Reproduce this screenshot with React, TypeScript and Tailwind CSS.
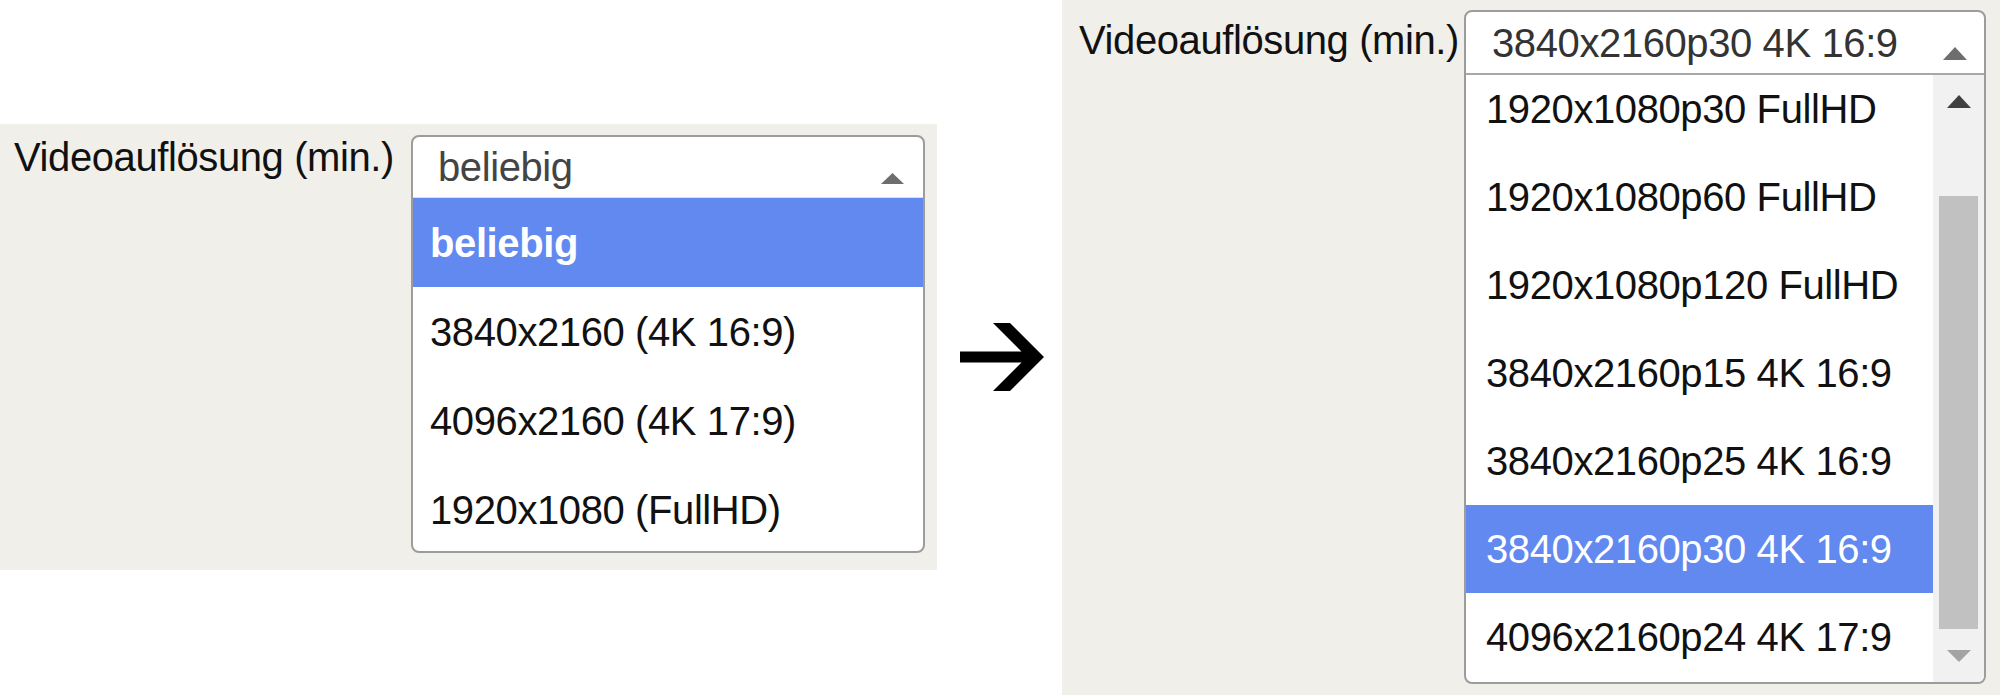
import React from 'react';

const OLD_OPTIONS = ['beliebig', '3840x2160 (4K 16:9)', '4096x2160 (4K 17:9)', '1920x1080 (FullHD)'];

const NEW_OPTIONS = [
    '1920x1080p30 FullHD',
    '1920x1080p60 FullHD',
    '1920x1080p120 FullHD',
    '3840x2160p15 4K 16:9',
    '3840x2160p25 4K 16:9',
    '3840x2160p30 4K 16:9',
    '4096x2160p24 4K 17:9',
];

const Triangle: React.FC<{ w: number; h: number; color: string; down?: boolean; className?: string }> = ({ w, h, color, down, className }) => (
    <svg width={w} height={h} viewBox={`0 0 ${w} ${h}`} className={className}>
        <polygon points={down ? `0,0 ${w},0 ${w / 2},${h}` : `${w / 2},0 ${w},${h} 0,${h}`} fill={color} />
    </svg>
);

export default function App() {
    return (
        <div className="w-[2000px] h-[695px] bg-white flex font-['Liberation_Sans',Arial,sans-serif] text-[40px] tracking-[-0.4px] leading-none text-[#111]">
            {/* Before */}
            <div className="w-[937px] h-[446px] mt-[124px] bg-[#f0efe9] flex pl-[14px] shrink-0">
                <div className="w-[397px] shrink-0 pt-[13px]">Videoauflösung (min.)</div>
                <div className="w-[514px] h-[418px] mt-[11px] border-2 border-[#9c9c9c] rounded-[8px] bg-white overflow-hidden flex flex-col">
                    <div className="h-[61px] shrink-0 border-b border-[#e4ddcf] flex items-center justify-between pl-[25px] pr-[19px] text-[#444]">
                        <span>beliebig</span>
                        <Triangle w={23} h={11} color="#6e6e6e" className="mt-[22px]" />
                    </div>
                    {OLD_OPTIONS.map((opt, i) => (
                        <div
                            key={opt}
                            className={
                                i === 0
                                    ? 'h-[89px] shrink-0 flex items-center pl-[17px] bg-[#6189ef] text-white font-bold'
                                    : 'h-[89px] shrink-0 flex items-center pl-[17px]'
                            }
                        >
                            {opt}
                        </div>
                    ))}
                </div>
            </div>

            {/* Arrow */}
            <div className="w-[125px] shrink-0 pl-[23px] pt-[323px]">
                <svg width="84" height="68" viewBox="0 0 84 68">
                    <polygon points="0,28.5 61.5,28.5 33,0 50,0 84,34 50,68 33,68 61.5,39.5 0,39.5" fill="#000" />
                </svg>
            </div>

            {/* After */}
            <div className="flex-1 h-[695px] bg-[#f0efe9] flex pl-[17px]">
                <div className="w-[385px] shrink-0 pt-[20px]">Videoauflösung (min.)</div>
                <div className="w-[522px] h-[674px] mt-[10px] border-2 border-[#9c9c9c] rounded-[8px] bg-white overflow-hidden flex flex-col">
                    <div className="h-[63px] shrink-0 border-b-2 border-[#a8a8a8] flex items-center justify-between pl-[26px] pr-[17px] text-[#333]">
                        <span>3840x2160p30 4K 16:9</span>
                        <Triangle w={24} h={13} color="#6e6e6e" className="mt-[22px]" />
                    </div>
                    <div className="flex-1 flex overflow-hidden">
                        <div className="flex-1 overflow-hidden">
                            <div className="mt-[-10px]">
                                {NEW_OPTIONS.map((opt, i) => (
                                    <div
                                        key={opt}
                                        className={
                                            i === 5
                                                ? 'h-[88px] flex items-center pl-[20px] bg-[#6189ef] text-white'
                                                : 'h-[88px] flex items-center pl-[20px]'
                                        }
                                    >
                                        {opt}
                                    </div>
                                ))}
                            </div>
                        </div>
                        {/* Scrollbar */}
                        <div className="w-[51px] shrink-0 bg-[#f1f1f1] flex flex-col">
                            <div className="h-[53px] flex items-center justify-center">
                                <Triangle w={24} h={13} color="#404040" />
                            </div>
                            <div className="flex-1 pt-[68px]">
                                <div className="h-[433px] mx-[6px] bg-[#c1c1c1]" />
                            </div>
                            <div className="h-[53px] flex items-center justify-center">
                                <Triangle w={24} h={12} color="#a3a3a3" down />
                            </div>
                        </div>
                    </div>
                </div>
            </div>
        </div>
    );
}
